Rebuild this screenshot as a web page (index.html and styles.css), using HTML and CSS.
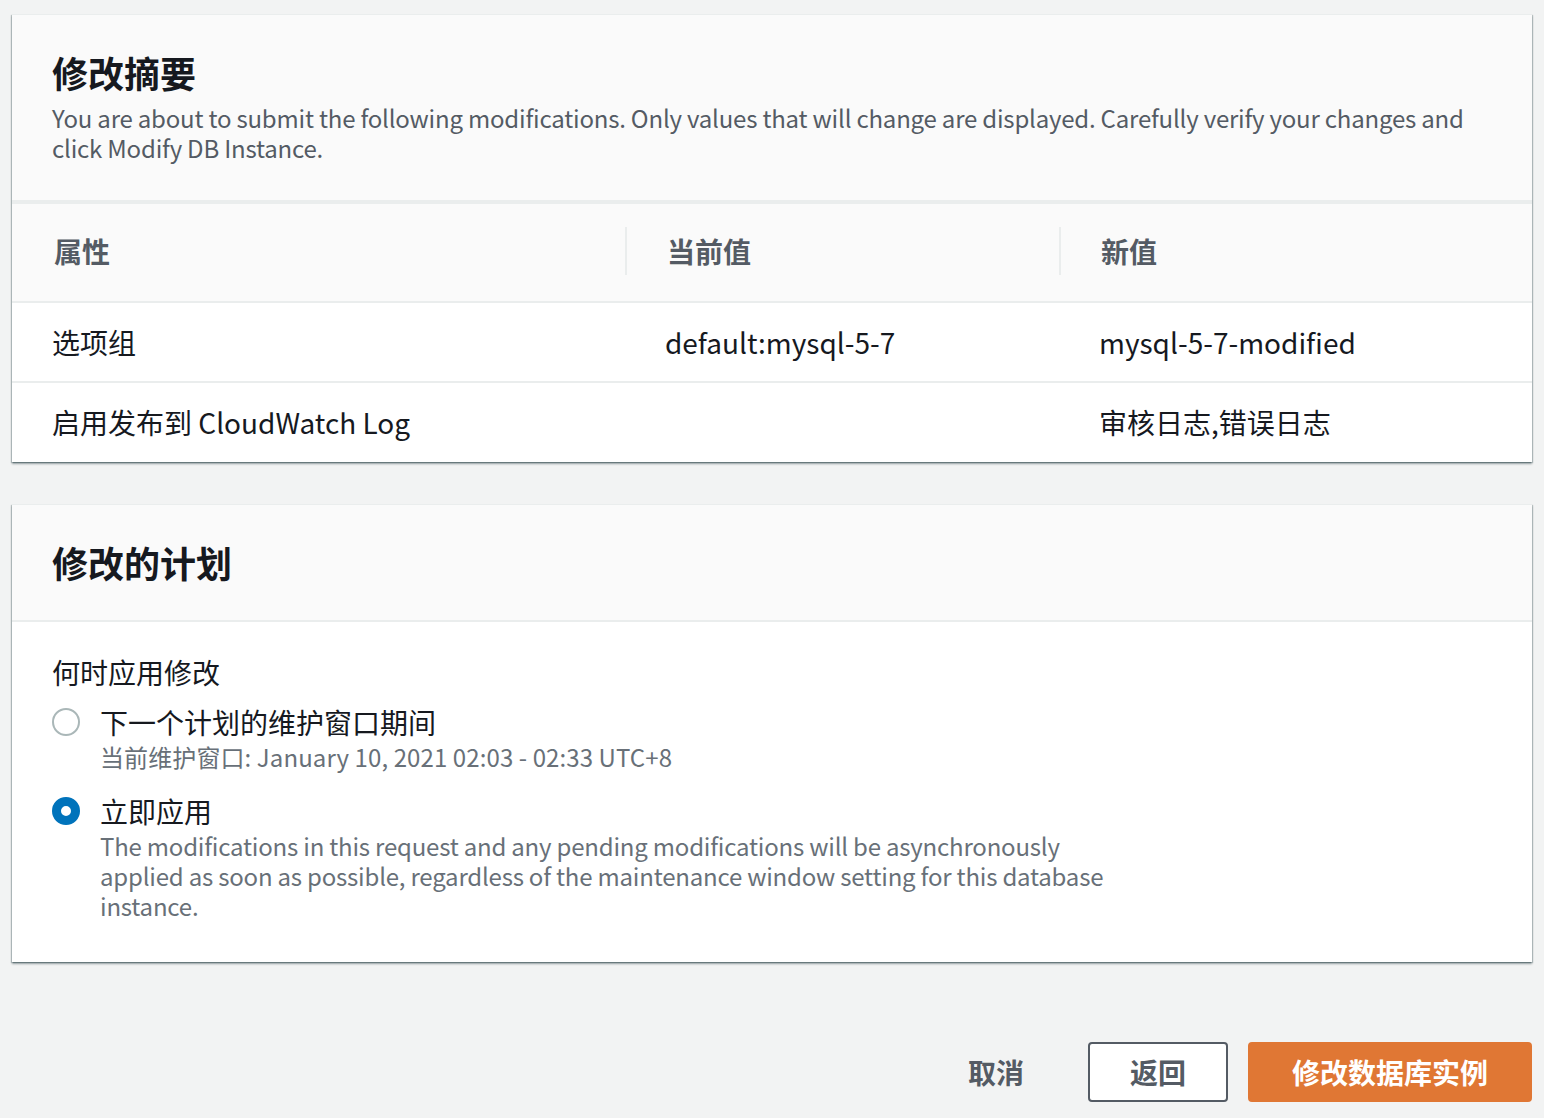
FILE: index.html
```html
<!DOCTYPE html>
<html lang="zh-CN">
<head>
<meta charset="utf-8">
<title>修改摘要</title>
<link rel="stylesheet" href="styles.css">
</head>
<body>
<main class="page">
  <section class="card">
    <header class="card-header">
      <h2 class="card-title">修改摘要</h2>
      <p class="card-desc">You are about to submit the following modifications. Only values that will change are displayed. Carefully verify your changes and click Modify DB Instance.</p>
    </header>
    <div class="summary-table">
      <div class="row row-head">
        <div class="cell"><span class="th">属性</span></div>
        <div class="cell"><span class="th th-sep">当前值</span></div>
        <div class="cell"><span class="th th-sep">新值</span></div>
      </div>
      <div class="row">
        <div class="cell">选项组</div>
        <div class="cell">default:mysql-5-7</div>
        <div class="cell">mysql-5-7-modified</div>
      </div>
      <div class="row row-last">
        <div class="cell">启用发布到 CloudWatch Log</div>
        <div class="cell"></div>
        <div class="cell">审核日志,错误日志</div>
      </div>
    </div>
  </section>

  <section class="card card-plan">
    <header class="card-header">
      <h2 class="card-title">修改的计划</h2>
    </header>
    <div class="card-body">
      <div class="field-label">何时应用修改</div>
      <div class="radio-group">
        <label class="radio-option">
          <span class="radio"></span>
          <span class="radio-text">
            <span class="radio-label">下一个计划的维护窗口期间</span>
            <span class="radio-desc">当前维护窗口: January 10, 2021 02:03 - 02:33 UTC+8</span>
          </span>
        </label>
        <label class="radio-option">
          <span class="radio radio-checked"></span>
          <span class="radio-text">
            <span class="radio-label">立即应用</span>
            <span class="radio-desc radio-desc-wide">The modifications in this request and any pending modifications will be asynchronously applied as soon as possible, regardless of the maintenance window setting for this database instance.</span>
          </span>
        </label>
      </div>
    </div>
  </section>

  <div class="actions">
    <button class="btn btn-link" type="button">取消</button>
    <button class="btn btn-normal" type="button">返回</button>
    <button class="btn btn-primary" type="button">修改数据库实例</button>
  </div>
</main>
</body>
</html>
```

FILE: styles.css
```css
* {
  box-sizing: border-box;
}

html, body {
  margin: 0;
  padding: 0;
  background: #f2f3f3;
}

body {
  font-family: "Noto Sans CJK SC", "Noto Sans", sans-serif;
  color: #16191f;
  font-size: 28px;
  line-height: 40px;
}

.page {
  padding: 14px 12px 0 12px;
  display: flex;
  flex-direction: column;
}

.card {
  background: #ffffff;
  border-top: 1px solid #eaeded;
  box-shadow: 0 2px 2px 0 rgba(0, 28, 36, 0.35), 1px 1px 1px 0 rgba(0, 28, 36, 0.2), -1px 1px 1px 0 rgba(0, 28, 36, 0.2);
}

.card-plan {
  margin-top: 42px;
}

.card-header {
  background: #fafafa;
  padding: 35px 40px 37px 40px;
  border-bottom: 2px solid #eaeded;
}

.card-plan .card-header {
  padding-bottom: 36px;
}

.card-title {
  margin: 0;
  font-size: 36px;
  line-height: 44px;
  font-weight: 700;
  color: #16191f;
}

.card-desc {
  margin: 9px 0 0 0;
  font-size: 24px;
  line-height: 30px;
  letter-spacing: -0.2px;
  color: #545b64;
}

.summary-table {
  display: flex;
  flex-direction: column;
}

.row {
  display: grid;
  grid-template-columns: 613px 434px 1fr;
  height: 80px;
  border-bottom: 2px solid #eaeded;
  align-items: center;
}

.row-head {
  background: #fafafa;
  height: 101px;
  border-top: 2px solid #eaeded;
}

.row-last {
  border-bottom: none;
  height: 79px;
}

.cell {
  padding-left: 40px;
  padding-bottom: 1px;
  white-space: nowrap;
}

.row-head .cell {
  padding-left: 0;
  padding-bottom: 4px;
}

.th {
  display: block;
  padding-left: 42px;
  line-height: 48px;
  font-weight: 700;
  color: #545b64;
}

.th-sep {
  border-left: 2px solid #eaeded;
  padding-left: 40px;
}

.card-body {
  padding: 30px 40px 41px 40px;
}

.field-label {
  line-height: 40px;
  color: #16191f;
}

.radio-group {
  display: flex;
  flex-direction: column;
  gap: 19px;
  margin-top: 10px;
}

.radio-option {
  display: flex;
  align-items: flex-start;
  gap: 20px;
}

.radio {
  flex: none;
  width: 28px;
  height: 28px;
  margin-top: 6px;
  border-radius: 50%;
  border: 2px solid #aab7b8;
  background: #ffffff;
}

.radio-checked {
  border: 9px solid #0073bb;
}

.radio-text {
  display: flex;
  flex-direction: column;
}

.radio-label {
  line-height: 40px;
  color: #16191f;
}

.radio-desc {
  font-size: 24px;
  line-height: 30px;
  letter-spacing: 0.1px;
  color: #687078;
}

.radio-desc-wide {
  max-width: 1010px;
  letter-spacing: -0.2px;
}

.actions {
  display: flex;
  justify-content: flex-end;
  align-items: center;
  gap: 20px;
  margin-top: 80px;
}

.btn {
  font-family: inherit;
  font-size: 28px;
  font-weight: 700;
  height: 60px;
  line-height: 56px;
  border-radius: 4px;
  padding: 0 40px;
  border: 2px solid transparent;
  cursor: pointer;
}

.btn-link {
  background: transparent;
  color: #545b64;
  padding: 0 20px;
  margin-right: 22px;
}

.btn-normal {
  background: #ffffff;
  color: #545b64;
  border-color: #545b64;
  width: 140px;
  padding: 0;
}

.btn-primary {
  background: #e07734;
  border-color: #e07734;
  color: #ffffff;
  width: 284px;
  padding: 0;
}
```
